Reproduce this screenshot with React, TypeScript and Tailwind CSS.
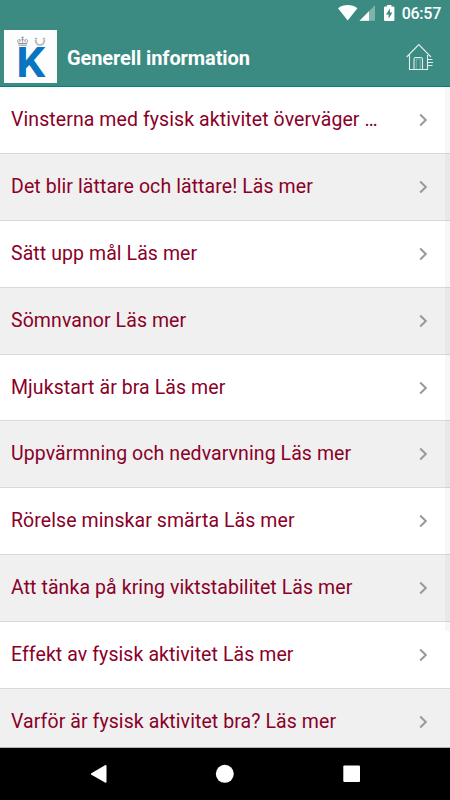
const items = [
  "Vinsterna med fysisk aktivitet överväger …",
  "Det blir lättare och lättare! Läs mer",
  "Sätt upp mål Läs mer",
  "Sömnvanor Läs mer",
  "Mjukstart är bra Läs mer",
  "Uppvärmning och nedvarvning Läs mer",
  "Rörelse minskar smärta Läs mer",
  "Att tänka på kring viktstabilitet Läs mer",
  "Effekt av fysisk aktivitet Läs mer",
  "Varför är fysisk aktivitet bra? Läs mer",
];

function StatusBar() {
  return (
    <div className="flex h-[27px] items-center justify-end pr-[9px] text-white">
      <svg className="h-[27px] w-[64px]" viewBox="0 0 64 27" fill="currentColor">
        {/* wifi */}
        <path d="M0 8.2C5.5 4 14 4 19.4 8.2L9.7 20.5Z" />
        {/* signal */}
        <path d="M21.5 20.8 37 5.2V20.8Z" opacity=".35" />
        <path d="M21.5 20.8 31 11.2V20.8Z" />
        {/* battery */}
        <path
          fillRule="evenodd"
          d="M49 5H53.4V6.5H55.2Q56.4 6.5 56.4 7.7V19.7Q56.4 20.9 55.2 20.9H47.2Q46 20.9 46 19.7V7.7Q46 6.5 47.2 6.5H49ZM52 8.5 48 14.6H50.6V18.7L54.4 12.4H52Z"
        />
      </svg>
      <span className="text-[16px] leading-[27px] font-medium tracking-[-0.25px]">06:57</span>
    </div>
  );
}

function Logo() {
  return (
    <div className="h-[53px] w-[53px] bg-[#fdfdfd]">
      <svg className="h-[53px] w-[53px] overflow-visible" viewBox="0 0 53 53">
        {/* crown */}
        <g fill="none" stroke="#8b8f92" strokeWidth="0.8">
          <path d="M14.5 15.3H23M14.5 13.8H23M14.5 13.5 13.5 10.5Q15 8.5 16.7 10.3Q18.6 8 20.5 10.3Q22 8.5 23.7 10.5L22.7 13.5ZM18.6 13V6.5M17.4 7.6H19.8M16 12.5 15.5 10.5M21.2 12.5V10.5" />
        </g>
        {/* wreath */}
        <g fill="none" stroke="#a4a7a9">
          <path d="M32.3 8C30.6 11.8 33 15 36 15C39 15 41.4 11.8 39.7 8" strokeWidth="0.8" />
          <path d="M32.3 8C30.6 11.8 33 15 36 15C39 15 41.4 11.8 39.7 8" strokeWidth="2.4" strokeDasharray=".8 1" />
        </g>
        <text x="12.2" y="47" fontSize="42" fontWeight="700" textLength="29" lengthAdjust="spacingAndGlyphs" fill="#0874c2">
          K
        </text>
      </svg>
    </div>
  );
}

function HomeIcon() {
  return (
    <svg className="h-[28px] w-[28px]" viewBox="0 0 28 28" fill="none" stroke="#e5efed" strokeWidth="1.1">
      <path d="M.7 14 12.8 1.6 25 14M3.5 12V26.5H21.5V12M8 26.5V16.2Q8 14.5 9.7 14.5H14.8Q16.5 14.5 16.5 16.2V26.5" />
      <path d="M10.3 26V16H14.2V26" opacity=".35" />
      <path d="M21.5 16.5H26.5M21.5 19.5H27M21.5 22.5H26.5" />
    </svg>
  );
}

export default function App() {
  return (
    <div className="relative flex h-[800px] w-[450px] flex-col overflow-hidden bg-white font-['Roboto',sans-serif]">
      <header className="h-[87px] shrink-0 border-b border-[#008477] bg-[#3b8b83]">
        <StatusBar />
        <div className="flex h-[59px] items-center pr-[16px] pl-[4px]">
          <Logo />
          <h1 className="ml-[10px] flex-1 pt-[2px] text-[20px] leading-[24px] font-bold tracking-[-0.1px] text-white">
            Generell information
          </h1>
          <HomeIcon />
        </div>
      </header>

      <ul className="h-[661px] overflow-hidden border-b border-[#b5b5b5]">
        {items.map((item) => (
          <li
            key={item}
            className="flex h-[66.9px] items-center border-b border-[#d9d9d9] pr-[22.5px] pl-[11px] odd:bg-white even:bg-[#f0f0f0]"
          >
            <span className="flex-1 whitespace-nowrap text-[19.5px] leading-[24px] tracking-[0.08px] text-[#8a0028]">
              {item}
            </span>
            <svg className="h-[14px] w-[9px]" viewBox="0 0 9 14" fill="none" stroke="#999" strokeWidth="2">
              <path d="M1.2 1.5 6.8 7 1.2 12.5" />
            </svg>
          </li>
        ))}
      </ul>

      {/* scroll thumb */}
      <div className="absolute top-[87px] right-0 h-[544px] w-[5px] bg-black/[0.03]" />

      <nav className="flex h-[52px] shrink-0 bg-black">
        <svg className="h-[52px] w-[450px]" viewBox="0 0 450 52" fill="white">
          <path d="M91.4 25.2 105 17.2Q106.5 16.5 106.5 18V33.8Q106.5 35.4 105 34.6L91.4 26.8Q90.2 26 91.4 25.2Z" />
          <circle cx="224.8" cy="25.8" r="9" />
          <rect x="343.3" y="17.4" width="16.7" height="16.7" rx="1" />
        </svg>
      </nav>
    </div>
  );
}
